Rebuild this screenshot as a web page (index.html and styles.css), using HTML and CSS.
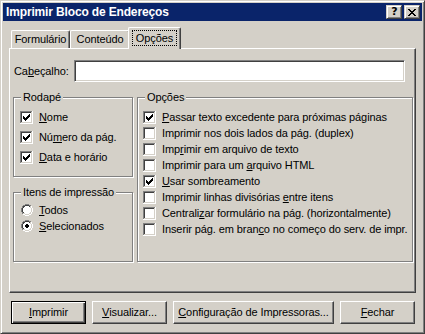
FILE: index.html
```html
<!DOCTYPE html>
<html lang="pt-BR">
<head>
<meta charset="utf-8">
<title>Imprimir Bloco de Endereços</title>
<link rel="stylesheet" href="styles.css">
</head>
<body>
<svg class="defs" width="0" height="0" aria-hidden="true">
  <defs>
    <symbol id="cb-off" viewBox="0 0 13 13">
      <rect x="0" y="0" width="13" height="13" fill="#fff"/>
      <path d="M0 0h12v1h-12z M0 0h1v12h-1z" fill="#808080"/>
      <path d="M1 1h10v1h-10z M1 1h1v10h-1z" fill="#404040"/>
      <path d="M1 11h11v1h-11z M11 1h1v11h-1z" fill="#d4d0c8"/>
    </symbol>
    <symbol id="cb-on" viewBox="0 0 13 13">
      <use href="#cb-off"/>
      <path d="M3 5h1v3h-1z M4 6h1v3h-1z M5 7h1v3h-1z M6 6h1v3h-1z M7 5h1v3h-1z M8 4h1v3h-1z M9 3h1v3h-1z" fill="#000"/>
    </symbol>
    <symbol id="rb-off" viewBox="0 0 12 12">
      <path d="M4 2h4v8h-4z M3 3h6v6h-6z M2 4h8v4h-8z" fill="#fff"/>
      <path d="M4 0h4v1h-4z M2 1h2v1h-2z M8 1h2v1h-2z M1 2h1v2h-1z M0 4h1v4h-1z M1 8h1v2h-1z" fill="#808080"/>
      <path d="M10 2h1v2h-1z M11 4h1v4h-1z M10 8h1v2h-1z M2 10h2v1h-2z M8 10h2v1h-2z M4 11h4v1h-4z" fill="#fff"/>
      <path d="M4 1h4v1h-4z M2 2h2v1h-2z M8 2h1v1h-1z M2 3h1v1h-1z M1 4h1v4h-1z M2 8h1v1h-1z" fill="#404040"/>
      <path d="M9 3h1v1h-1z M10 4h1v4h-1z M9 8h1v1h-1z M3 9h1v1h-1z M8 9h1v1h-1z M4 10h4v1h-4z" fill="#d4d0c8"/>
    </symbol>
    <symbol id="rb-on" viewBox="0 0 12 12">
      <use href="#rb-off"/>
      <path d="M5 4h2v4h-2z M4 5h4v2h-4z" fill="#000"/>
    </symbol>
  </defs>
</svg>

<div class="window">
  <div class="titlebar">
    <span class="title">Imprimir Bloco de Endereços</span>
    <div class="caption-btns">
      <div class="cbtn help">?</div>
      <div class="cbtn close">
        <svg class="xglyph" width="8" height="7" viewBox="0 0 8 7"><path d="M0 0h2v1h-2z M6 0h2v1h-2z M1 1h2v1h-2z M5 1h2v1h-2z M2 2h4v1h-4z M3 3h2v1h-2z M2 4h4v1h-4z M1 5h2v1h-2z M5 5h2v1h-2z M0 6h2v1h-2z M6 6h2v1h-2z" fill="#000"/></svg>
      </div>
    </div>
  </div>

  <div class="body">
    <div class="tabs">
      <div class="tab tab-form">Formulário</div>
      <div class="tab tab-cont">Conteúdo</div>
      <div class="tab tab-opc active"><span class="focus">Opções</span></div>
    </div>

    <div class="panel">
      <div class="header-row">
        <span class="field-label">Ca<u>b</u>eçalho:</span>
        <div class="input"></div>
      </div>

      <div class="groups">
        <div class="col">
          <div class="group rodape">
            <span class="legend">Rodapé</span>
            <div class="opt"><svg class="cb"><use href="#cb-on"/></svg><span><u>N</u>ome</span></div>
            <div class="opt"><svg class="cb"><use href="#cb-on"/></svg><span>Nú<u>m</u>ero da pág.</span></div>
            <div class="opt"><svg class="cb"><use href="#cb-on"/></svg><span><u>D</u>ata e horário</span></div>
          </div>
          <div class="group itens">
            <span class="legend">Itens de impressão</span>
            <div class="opt radio"><svg class="rb"><use href="#rb-off"/></svg><span><u>T</u>odos</span></div>
            <div class="opt radio"><svg class="rb"><use href="#rb-on"/></svg><span><u>S</u>elecionados</span></div>
          </div>
        </div>

        <div class="group opcoes">
          <span class="legend">Opções</span>
          <div class="opt"><svg class="cb"><use href="#cb-on"/></svg><span><u>P</u>assar texto excedente para próximas páginas</span></div>
          <div class="opt"><svg class="cb"><use href="#cb-off"/></svg><span>Imprimir nos dois lados da pág. (duplex)</span></div>
          <div class="opt"><svg class="cb"><use href="#cb-off"/></svg><span>Imp<u>r</u>imir em arquivo de texto</span></div>
          <div class="opt"><svg class="cb"><use href="#cb-off"/></svg><span>Imprimir para um <u>a</u>rquivo HTML</span></div>
          <div class="opt"><svg class="cb"><use href="#cb-on"/></svg><span><u>U</u>sar sombreamento</span></div>
          <div class="opt"><svg class="cb"><use href="#cb-off"/></svg><span>Imprimir linhas divisórias <u>e</u>ntre itens</span></div>
          <div class="opt"><svg class="cb"><use href="#cb-off"/></svg><span>Centrali<u>z</u>ar formulário na pág. (horizontalmente)</span></div>
          <div class="opt"><svg class="cb"><use href="#cb-off"/></svg><span>Inserir pág. em bran<u>c</u>o no começo do serv. de impr.</span></div>
        </div>
      </div>
    </div>

    <div class="buttons">
      <div class="btn default"><span><u>I</u>mprimir</span></div>
      <div class="btn"><span><u>V</u>isualizar...</span></div>
      <div class="btn wide"><span><u>C</u>onfiguração de Impressoras...</span></div>
      <div class="btn"><span><u>F</u>echar</span></div>
    </div>
  </div>
</div>
</body>
</html>
```

FILE: styles.css
```css
* { box-sizing: border-box; }

html, body {
  margin: 0;
  padding: 0;
  background: #d4d0c8;
}

body {
  font-family: "Liberation Sans", Arial, sans-serif;
  font-size: 11px;
  letter-spacing: -0.1px;
  color: #000;
}

.defs {
  position: absolute;
  width: 0;
  height: 0;
  overflow: hidden;
}

u { text-decoration: underline; text-underline-offset: 1px; }

.window {
  width: 425px;
  height: 334px;
  background: #d4d0c8;
  border: 1px solid;
  border-color: #d4d0c8 #404040 #404040 #d4d0c8;
  box-shadow: inset 1px 1px #fff, inset -1px -1px #808080;
  padding: 2px;
  display: flex;
  flex-direction: column;
}

/* Title bar */
.titlebar {
  height: 18px;
  background: #0a246a;
  display: flex;
  align-items: center;
  justify-content: space-between;
  padding: 0 2px 0 3px;
}

.title {
  color: #fff;
  font-weight: bold;
  font-size: 12px;
  letter-spacing: -0.15px;
  line-height: 18px;
}

.caption-btns {
  display: flex;
  gap: 2px;
}

.cbtn {
  width: 16px;
  height: 14px;
  background: #d4d0c8;
  border: 1px solid;
  border-color: #d4d0c8 #404040 #404040 #d4d0c8;
  box-shadow: inset 1px 1px #fff, inset -1px -1px #808080;
  display: flex;
  align-items: center;
  justify-content: center;
}

.help {
  font-family: "DejaVu Sans", sans-serif;
  font-weight: bold;
  font-size: 11px;
  line-height: 12px;
  letter-spacing: 0;
  padding-left: 1px;
}

.xglyph { display: block; }

/* Body */
.body {
  flex: 1;
  padding: 6px 6px 0 6px;
  display: flex;
  flex-direction: column;
}

.tabs {
  height: 21px;
  display: flex;
  align-items: flex-end;
  padding-left: 2px;
  position: relative;
  z-index: 2;
}

.tab {
  height: 18px;
  border-left: 1px solid #fff;
  border-top: 1px solid #fff;
  border-right: 1px solid #404040;
  border-radius: 2px 2px 0 0;
  box-shadow: inset -1px 0 #808080;
  display: flex;
  align-items: center;
  justify-content: center;
  padding-bottom: 1px;
  background: #d4d0c8;
}

.tab-form { width: 59px; }
.tab-cont { width: 60px; }

.tab.active {
  height: 22px;
  width: 53px;
  margin-left: -2px;
  margin-bottom: -1px;
  padding-bottom: 2px;
  position: relative;
  z-index: 3;
}

.focus {
  border: 1px dotted #000;
  padding: 1px 3px 1px 3px;
  line-height: 12px;
}

.panel {
  height: 245px;
  border-top: 1px solid #fff;
  border-left: 1px solid #fff;
  border-right: 1px solid #404040;
  border-bottom: 1px solid #404040;
  box-shadow: inset -1px -1px #808080;
  padding: 11px 2px 0 3px;
  position: relative;
  z-index: 1;
}

.header-row {
  height: 22px;
  display: flex;
  align-items: center;
}

.field-label {
  width: 61px;
  padding-left: 1px;
}

.input {
  width: 331px;
  height: 22px;
  background: #fff;
  border: 1px solid;
  border-color: #808080 #fff #fff #808080;
  box-shadow: inset 1px 1px #404040, inset -1px -1px #d4d0c8;
}

.groups {
  margin-top: 15px;
  display: flex;
  gap: 4px;
}

.col {
  width: 120px;
  display: flex;
  flex-direction: column;
}

.group {
  position: relative;
  border: 1px solid #808080;
  box-shadow: inset 1px 1px #fff, 1px 1px #fff;
  display: flex;
  flex-direction: column;
}

.legend {
  position: absolute;
  top: -8px;
  left: 7px;
  padding: 0 2px;
  background: #d4d0c8;
  line-height: 14px;
}

.rodape {
  height: 80px;
  padding: 13px 0 0 6px;
  gap: 7px;
}

.itens {
  height: 70px;
  margin-top: 15px;
  padding: 11px 0 0 7px;
  gap: 4px;
}

.opcoes {
  flex: 1;
  height: 165px;
  padding: 13px 0 0 5px;
  gap: 3px;
}

.opt {
  height: 13px;
  display: flex;
  align-items: center;
  gap: 6px;
  line-height: 13px;
  white-space: nowrap;
}

.opt.radio { height: 12px; gap: 6px; }

.cb {
  width: 13px;
  height: 13px;
  flex: none;
  display: block;
}

.rb {
  width: 12px;
  height: 12px;
  flex: none;
  display: block;
}

/* Buttons */
.buttons {
  margin-top: 8px;
  padding-left: 2px;
  display: flex;
  gap: 6px;
}

.btn {
  width: 75px;
  height: 23px;
  border: 1px solid;
  border-color: #fff #404040 #404040 #fff;
  box-shadow: inset -1px -1px #808080;
  display: flex;
  align-items: center;
  justify-content: center;
  padding-bottom: 1px;
}

.btn.wide { width: 161px; }

.btn.default {
  border-color: #000;
  box-shadow: inset 1px 1px #fff, inset -1px -1px #404040, inset -2px -2px #808080;
}
```
